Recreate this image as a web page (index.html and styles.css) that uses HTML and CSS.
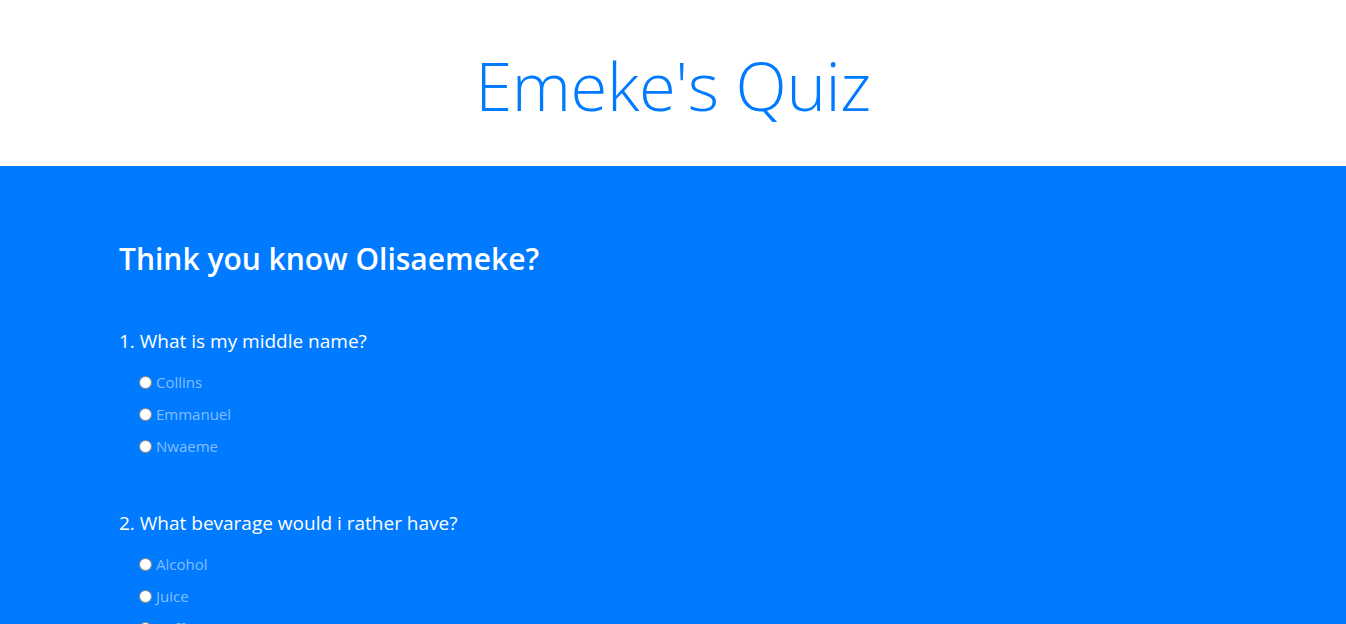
FILE: index.html
```html
<!DOCTYPE html>
<html lang="en">
<head>
<meta charset="utf-8">
<title>Emeke's Quiz</title>
<link rel="stylesheet" href="styles.css">
</head>
<body>
<header class="masthead">
  <h1 class="title">Emeke's Quiz</h1>
</header>
<main class="quiz">
  <div class="container">
    <h2 class="lead-title">Think you know Olisaemeke?</h2>
    <form class="questions">
      <fieldset class="question">
        <p class="q-text">1. What is my middle name?</p>
        <label class="option"><input type="radio" name="q1"> Collins</label>
        <label class="option"><input type="radio" name="q1"> Emmanuel</label>
        <label class="option"><input type="radio" name="q1"> Nwaeme</label>
      </fieldset>
      <fieldset class="question">
        <p class="q-text">2. What bevarage would i rather have?</p>
        <label class="option"><input type="radio" name="q2"> Alcohol</label>
        <label class="option"><input type="radio" name="q2"> Juice</label>
        <label class="option"><input type="radio" name="q2"> Coffee</label>
      </fieldset>
    </form>
  </div>
</main>
</body>
</html>
```
FILE: styles.css
```css
* { box-sizing: border-box; }
html, body { margin: 0; padding: 0; }
body {
  font-family: "Open Sans", "Noto Sans", sans-serif;
  background: #007bff;
  color: #fff;
}
.masthead {
  background: #fff;
  height: 166px;
  display: flex;
  justify-content: center;
}
.title {
  margin: 0;
  padding-top: 52px;
  font-size: 67px;
  font-weight: 300;
  line-height: 1;
  color: #007bff;
  letter-spacing: -0.4px;
}
.quiz {
  padding-top: 75px;
  min-height: 458px;
}
.container {
  max-width: 1140px;
  margin: 0 auto;
  padding: 0 15px;
}
.lead-title {
  margin: 0 0 52px;
  font-size: 30px;
  font-weight: 600;
  line-height: 1.2;
  padding-left: 1px;
}
.questions { margin: 0; }
.question {
  border: 0;
  margin: 0 0 49px;
  padding: 0;
  display: flex;
  flex-direction: column;
}
.q-text {
  margin: 0 0 13px;
  padding-left: 1px;
  font-size: 19px;
  line-height: 24px;
}
.option {
  display: flex;
  align-items: center;
  height: 32px;
  padding-left: 20px;
  font-size: 15px;
  color: rgba(255, 255, 255, 0.52);
}
.option input {
  margin: 0 4px 0 1px;
  width: 13px;
  height: 13px;
}
```
